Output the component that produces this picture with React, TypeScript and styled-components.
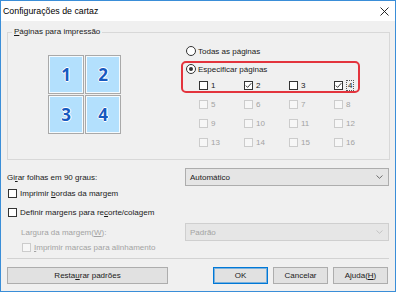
import styled, { createGlobalStyle } from "styled-components";

const GlobalStyle = createGlobalStyle`
  html, body {
    margin: 0;
    padding: 0;
    background: #fff;
  }
  body {
    font-family: "Liberation Sans", Arial, sans-serif;
  }
  * {
    box-sizing: border-box;
  }
`;

const CheckMark = () => (
  <svg width="7" height="7" viewBox="0 0 7 7">
    <polyline points="0.8,3.6 2.6,5.4 6.3,1.2" fill="none" stroke="#222" strokeWidth="0.9" />
  </svg>
);

const Chevron = ({ disabled }: { disabled?: boolean }) => (
  <svg width="7" height="4" viewBox="0 0 7 4">
    <polyline points="0.5,0.5 3.5,3.3 6.5,0.5" fill="none" stroke={disabled ? "#c0c0c0" : "#606060"} strokeWidth="0.9" />
  </svg>
);

interface CheckProps {
  checked?: boolean;
  disabled?: boolean;
  children: React.ReactNode;
}

const Check = ({ checked, disabled, children }: CheckProps) => (
  <CheckItem $disabled={disabled}>
    <CheckBox $disabled={disabled}>{checked && <CheckMark />}</CheckBox>
    <span>{children}</span>
  </CheckItem>
);

const Radio = ({ selected, children }: { selected?: boolean; children: React.ReactNode }) => (
  <RadioItem>
    <RadioCircle>{selected && <RadioDot />}</RadioCircle>
    <span>{children}</span>
  </RadioItem>
);

const Select = ({ value, disabled }: { value: string; disabled?: boolean }) => (
  <SelectBox $disabled={disabled}>
    <span>{value}</span>
    <Chevron disabled={disabled} />
  </SelectBox>
);

export default function App() {
  const rest = [5, 6, 7, 8, 9, 10, 11, 12, 13, 14, 15, 16];
  return (
    <>
      <GlobalStyle />
      <Window>
        <TitleBar>
          <span>Configurações de cartaz</span>
          <svg width="9" height="9" viewBox="0 0 9 9">
            <path d="M0.5 0.5 L8.5 8.5 M8.5 0.5 L0.5 8.5" stroke="#111" strokeWidth="0.9" />
          </svg>
        </TitleBar>
        <Body>
          <GroupBox>
            <Legend>
              <u>P</u>áginas para impressão
            </Legend>
            <LeftPane>
              <TileGrid>
                {[1, 2, 3, 4].map((n) => (
                  <Tile key={n}>{n}</Tile>
                ))}
              </TileGrid>
            </LeftPane>
            <RightPane>
              <RadioRow>
                <Radio>Todas as páginas</Radio>
              </RadioRow>
              <Highlight>
                <Radio selected>Especificar páginas</Radio>
                <PageGrid $inset={13} $top={4}>
                  <Check>1</Check>
                  <Check checked>2</Check>
                  <Check>3</Check>
                  <Check checked>
                    <Focus>4</Focus>
                  </Check>
                </PageGrid>
              </Highlight>
              <PageGrid $inset={18} $top={5}>
                {rest.map((n) => (
                  <Check key={n} disabled>
                    {n}
                  </Check>
                ))}
              </PageGrid>
            </RightPane>
          </GroupBox>

          <FieldRow $top={8} $inset={0}>
            <FieldLabel>
              Gi<u>r</u>ar folhas em 90 graus:
            </FieldLabel>
            <Select value="Automático" />
          </FieldRow>
          <OptionRow $top={1} $inset={1}>
            <Check>
              Imprimir <u>b</u>ordas da margem
            </Check>
          </OptionRow>
          <OptionRow $top={7} $inset={1}>
            <Check>
              Definir margens para re<u>c</u>orte/colagem
            </Check>
          </OptionRow>
          <FieldRow $top={5} $inset={14}>
            <FieldLabel $disabled $width={164}>
              Largura da margem(<u>W</u>):
            </FieldLabel>
            <Select value="Padrão" disabled />
          </FieldRow>
          <OptionRow $top={0} $inset={15}>
            <Check disabled>
              <u>I</u>mprimir marcas para alinhamento
            </Check>
          </OptionRow>
          <Separator />
          <ButtonBar>
            <Button $width={161}>
              Resta<u>u</u>rar padrões
            </Button>
            <Spacer />
            <Button $width={55} $primary>
              OK
            </Button>
            <Button $width={55}>Cancelar</Button>
            <Button $width={55}>
              Ajuda(<u>H</u>)
            </Button>
          </ButtonBar>
        </Body>
      </Window>
    </>
  );
}

const Window = styled.div`
  width: 396px;
  height: 292px;
  border: 1px solid #3a8ed8;
  background: #f0f0f0;
  display: flex;
  flex-direction: column;
  font-size: 8px;
  color: #1a1a1a;
  overflow: hidden;
`;

const TitleBar = styled.div`
  height: 20px;
  flex-shrink: 0;
  background: #fff;
  display: flex;
  align-items: center;
  justify-content: space-between;
  padding: 0 6px 0 2px;
  font-size: 8.8px;
  color: #000;
`;

const Body = styled.div`
  flex: 1;
  display: flex;
  flex-direction: column;
  padding: 5px 5px 7px 6px;
`;

const GroupBox = styled.fieldset`
  margin: 0;
  padding: 6px 0 11px 0;
  border: 1px solid #d8d8d8;
  display: flex;
  min-width: 0;
`;

const Legend = styled.legend`
  margin-left: 4px;
  padding: 0 2px;
  line-height: 12px;
  height: 12px;
`;

const LeftPane = styled.div`
  width: 173px;
  flex-shrink: 0;
  padding: 11px 0 0 40px;
`;

const TileGrid = styled.div`
  display: grid;
  grid-template-columns: 36px 36px;
  grid-template-rows: 39px 39px;
  gap: 1px;
`;

const Tile = styled.div`
  border: 1px solid #a9a9a9;
  background: #b3e0fd;
  box-shadow: inset 0 0 0 1px #f4fbff;
  display: flex;
  align-items: center;
  justify-content: center;
  font-family: "Open Sans", "Liberation Sans", sans-serif;
  font-weight: 700;
  font-size: 17px;
  color: #1759c0;
  text-shadow: 1px 0 0 #fff, -1px 0 0 #fff, 0 1px 0 #fff, 0 -1px 0 #fff;
`;

const RightPane = styled.div`
  width: 179px;
  display: flex;
  flex-direction: column;
`;

const RadioRow = styled.div`
  height: 14px;
  display: flex;
  align-items: center;
  padding-left: 5px;
`;

const RadioItem = styled.div`
  height: 12px;
  display: flex;
  align-items: center;
  gap: 2px;
`;

const RadioCircle = styled.span`
  width: 10px;
  height: 10px;
  border: 1px solid #333;
  border-radius: 50%;
  background: #fff;
  display: flex;
  align-items: center;
  justify-content: center;
`;

const RadioDot = styled.span`
  width: 4px;
  height: 4px;
  border-radius: 50%;
  background: #333;
`;

const Highlight = styled.div`
  margin-top: 3px;
  width: 179px;
  border: 2px solid #e3343d;
  border-radius: 5px;
  padding-left: 3px;
`;

const PageGrid = styled.div<{ $inset: number; $top: number }>`
  display: grid;
  grid-template-columns: 45px 45px 45px auto;
  grid-auto-rows: 12px;
  row-gap: 7px;
  margin-top: ${(p) => p.$top}px;
  padding-left: ${(p) => p.$inset}px;
`;

const CheckItem = styled.div<{ $disabled?: boolean }>`
  height: 12px;
  display: flex;
  align-items: center;
  gap: 3px;
  color: ${(p) => (p.$disabled ? "#a3a3a3" : "#1a1a1a")};
  white-space: nowrap;
`;

const CheckBox = styled.span<{ $disabled?: boolean }>`
  width: 9px;
  height: 9px;
  flex-shrink: 0;
  border: 1px solid ${(p) => (p.$disabled ? "#cccccc" : "#333")};
  background: ${(p) => (p.$disabled ? "#f7f7f7" : "#fff")};
  display: flex;
  align-items: center;
  justify-content: center;
`;

const Focus = styled.span`
  display: inline-block;
  line-height: 9px;
  border: 1px dotted #555;
  padding: 0 1px;
`;

const FieldRow = styled.div<{ $top: number; $inset: number }>`
  display: flex;
  align-items: center;
  height: 18px;
  margin-top: ${(p) => p.$top}px;
  padding-left: ${(p) => p.$inset}px;
`;

const FieldLabel = styled.span<{ $disabled?: boolean; $width?: number }>`
  width: ${(p) => p.$width ?? 178}px;
  flex-shrink: 0;
  color: ${(p) => (p.$disabled ? "#a3a3a3" : "#1a1a1a")};
`;

const SelectBox = styled.div<{ $disabled?: boolean }>`
  width: 204px;
  height: 18px;
  border: 1px solid ${(p) => (p.$disabled ? "#cfcfcf" : "#adadad")};
  background: ${(p) => (p.$disabled ? "#e6e6e6" : "#e5e5e5")};
  color: ${(p) => (p.$disabled ? "#a3a3a3" : "#1a1a1a")};
  display: flex;
  align-items: center;
  justify-content: space-between;
  padding: 0 5px 0 4px;
`;

const OptionRow = styled.div<{ $top: number; $inset: number }>`
  height: 12px;
  margin-top: ${(p) => p.$top}px;
  padding-left: ${(p) => p.$inset}px;
  display: flex;
`;

const Separator = styled.div`
  margin: 5px 1px 0 0;
  height: 1px;
  background: #d2d2d2;
`;

const ButtonBar = styled.div`
  margin-top: 8px;
  display: flex;
  gap: 5px;
  padding-right: 2px;
`;

const Spacer = styled.div`
  flex: 1;
`;

const Button = styled.div<{ $width: number; $primary?: boolean }>`
  width: ${(p) => p.$width}px;
  height: 17px;
  border: 1px solid ${(p) => (p.$primary ? "#0078d7" : "#adadad")};
  box-shadow: ${(p) => (p.$primary ? "inset 0 0 0 1px rgba(0, 120, 215, 0.45)" : "none")};
  background: #e1e1e1;
  display: flex;
  align-items: center;
  justify-content: center;
  color: #1a1a1a;
`;
